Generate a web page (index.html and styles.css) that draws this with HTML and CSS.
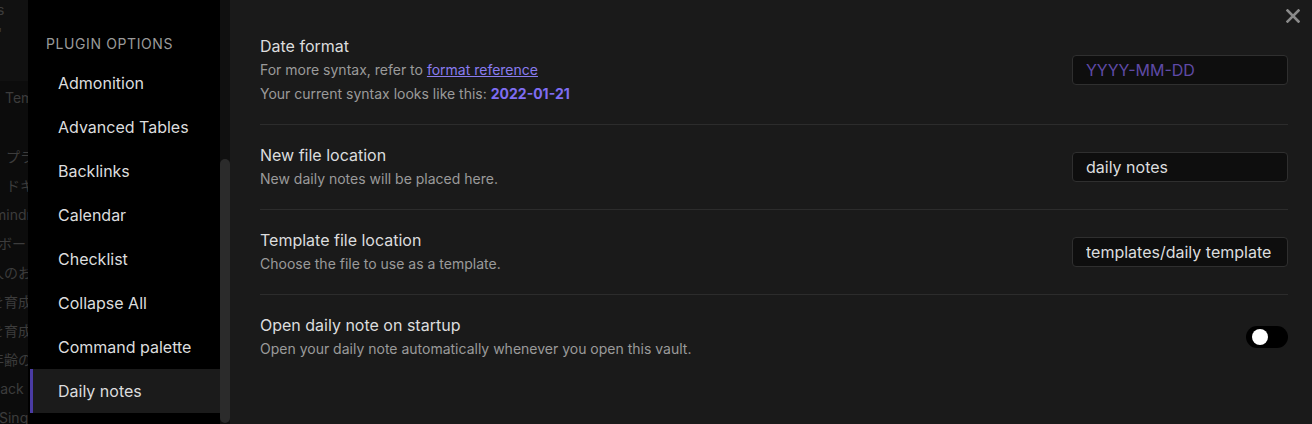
FILE: index.html
```html
<!DOCTYPE html>
<html>
<head>
<meta charset="utf-8">
<link rel="stylesheet" href="styles.css">
</head>
<body>
<div class="app">
  <div class="backdrop">
    <div class="bd-top"><span class="bd-s">s</span><span class="bd-q">'</span></div>
    <div class="bd-line bd-tem">Templates</div>
    <div class="bd-list">
      <div class="bd-line i1">プラグイン</div>
      <div class="bd-line i1">ドキュメント</div>
      <div class="bd-line i2">mindmap</div>
      <div class="bd-line i3">ボード</div>
      <div class="bd-line i4">人のおすすめ</div>
      <div class="bd-line i4">を育成</div>
      <div class="bd-line i4">を育成</div>
      <div class="bd-line i4">年齢の</div>
      <div class="bd-line i5">Back Up</div>
      <div class="bd-line i6">Single</div>
    </div>
  </div>
  <nav class="sidebar">
    <div class="side-list">
      <div class="side-heading">PLUGIN OPTIONS</div>
      <div class="side-item">Admonition</div>
      <div class="side-item">Advanced Tables</div>
      <div class="side-item">Backlinks</div>
      <div class="side-item">Calendar</div>
      <div class="side-item">Checklist</div>
      <div class="side-item">Collapse All</div>
      <div class="side-item">Command palette</div>
      <div class="side-item active">Daily notes</div>
    </div>
    <div class="side-scroll"><div class="thumb"></div></div>
  </nav>
  <main class="content">
    <button class="close" aria-label="Close">
      <svg width="14" height="14" viewBox="0 0 14 14"><path d="M1.5 1.5 L12.5 12.5 M12.5 1.5 L1.5 12.5" stroke="#8a8a8a" stroke-width="2.6" stroke-linecap="square" fill="none"/></svg>
    </button>
    <div class="setting">
      <div class="info">
        <div class="name">Date format</div>
        <div class="desc">For more syntax, refer to <a class="link" href="#">format reference</a></div>
        <div class="desc">Your current syntax looks like this: <b class="pop">2022-01-21</b></div>
      </div>
      <div class="control"><input class="text-input" type="text" placeholder="YYYY-MM-DD"></div>
    </div>
    <div class="setting">
      <div class="info">
        <div class="name">New file location</div>
        <div class="desc">New daily notes will be placed here.</div>
      </div>
      <div class="control"><input class="text-input" type="text" value="daily notes"></div>
    </div>
    <div class="setting">
      <div class="info">
        <div class="name">Template file location</div>
        <div class="desc">Choose the file to use as a template.</div>
      </div>
      <div class="control"><input class="text-input" type="text" value="templates/daily template"></div>
    </div>
    <div class="setting">
      <div class="info">
        <div class="name">Open daily note on startup</div>
        <div class="desc">Open your daily note automatically whenever you open this vault.</div>
      </div>
      <div class="control"><div class="toggle"><div class="knob"></div></div></div>
    </div>
  </main>
</div>
</body>
</html>
```

FILE: styles.css
```css
* { box-sizing: border-box; }
html, body { margin: 0; padding: 0; }
body {
  width: 1312px;
  height: 424px;
  overflow: hidden;
  background: #0b0b0b;
  font-family: Inter, "Noto Sans", "Noto Sans CJK JP", sans-serif;
}
.app {
  display: flex;
  height: 424px;
  overflow: hidden;
}

/* faded background window */
.backdrop {
  width: 28px;
  flex: none;
  overflow: hidden;
  background: #0c0c0c;
  color: #3c3c3c;
  font-size: 14px;
}
.bd-top {
  height: 81px;
  background: #111111;
  position: relative;
}
.bd-s { position: absolute; left: -3px; top: 1px; }
.bd-q { position: absolute; left: -2px; top: 25px; }
.bd-line {
  white-space: nowrap;
  line-height: 29px;
  height: 29px;
}
.bd-tem { padding-left: 5px; margin-top: 2px; height: 30px; line-height: 30px; }
.bd-list { margin-top: 29px; line-height: 29px; }
.i1 { padding-left: 6px; }
.i2 { margin-left: -6px; }
.i3 { margin-left: -2px; }
.i4 { margin-left: -10px; }
.i5 { margin-left: -9px; }
.i6 { margin-left: -1px; }

/* sidebar */
.sidebar {
  width: 202px;
  flex: none;
  display: flex;
  background: #000000;
}
.side-list {
  flex: 1;
  padding-top: 34px;
  padding-left: 2px;
}
.side-heading {
  padding-left: 16px;
  font-size: 14px;
  letter-spacing: 0.6px;
  color: #9a9a9a;
  height: 19px;
  line-height: 19px;
  margin-bottom: 8px;
}
.side-item {
  height: 44px;
  line-height: 44px;
  padding-left: 25px;
  font-size: 16px;
  color: #dcddde;
  border-left: 3px solid transparent;
  white-space: nowrap;
}
.side-item.active {
  background: #1b1b1b;
  border-left-color: #4a3ba3;
}
.side-scroll {
  width: 10px;
  flex: none;
  background: #101010;
  padding-top: 159px;
}
.thumb {
  height: 264px;
  background: #2b2b2b;
  border-radius: 5px;
}

/* content */
.content {
  flex: 1;
  background: #1a1a1a;
  padding: 16px 24px 0 30px;
  position: relative;
}
.close {
  position: absolute;
  top: 9px;
  right: 12px;
  width: 14px;
  height: 14px;
  padding: 0;
  border: 0;
  background: transparent;
  display: flex;
}
.setting {
  display: flex;
  align-items: center;
  padding: 18px 0;
  border-top: 1px solid #2c2c2c;
}
.setting:first-of-type { border-top: 0; }
.info { flex: 1; }
.name {
  font-size: 16px;
  line-height: 24px;
  color: #dcddde;
}
.desc {
  font-size: 14px;
  line-height: 24px;
  color: #9a9a9a;
}
.link { color: #8a7cf0; text-decoration: underline; }
.pop { color: #7f6df2; font-weight: 700; }
.control { flex: none; display: flex; align-items: center; }
.text-input {
  width: 216px;
  height: 30px;
  background: #0e0e0e;
  border: 1px solid #2f2f2f;
  border-radius: 4px;
  padding: 0 13px;
  font-family: Inter, "Noto Sans", sans-serif;
  font-size: 16px;
  color: #dcddde;
  outline: none;
}
.text-input::placeholder { color: #5f4aa6; }
.toggle {
  width: 42px;
  height: 22px;
  border-radius: 11px;
  background: #000000;
  padding: 3px 0 0 6px;
}
.knob {
  width: 16px;
  height: 16px;
  border-radius: 50%;
  background: #ffffff;
}
```
